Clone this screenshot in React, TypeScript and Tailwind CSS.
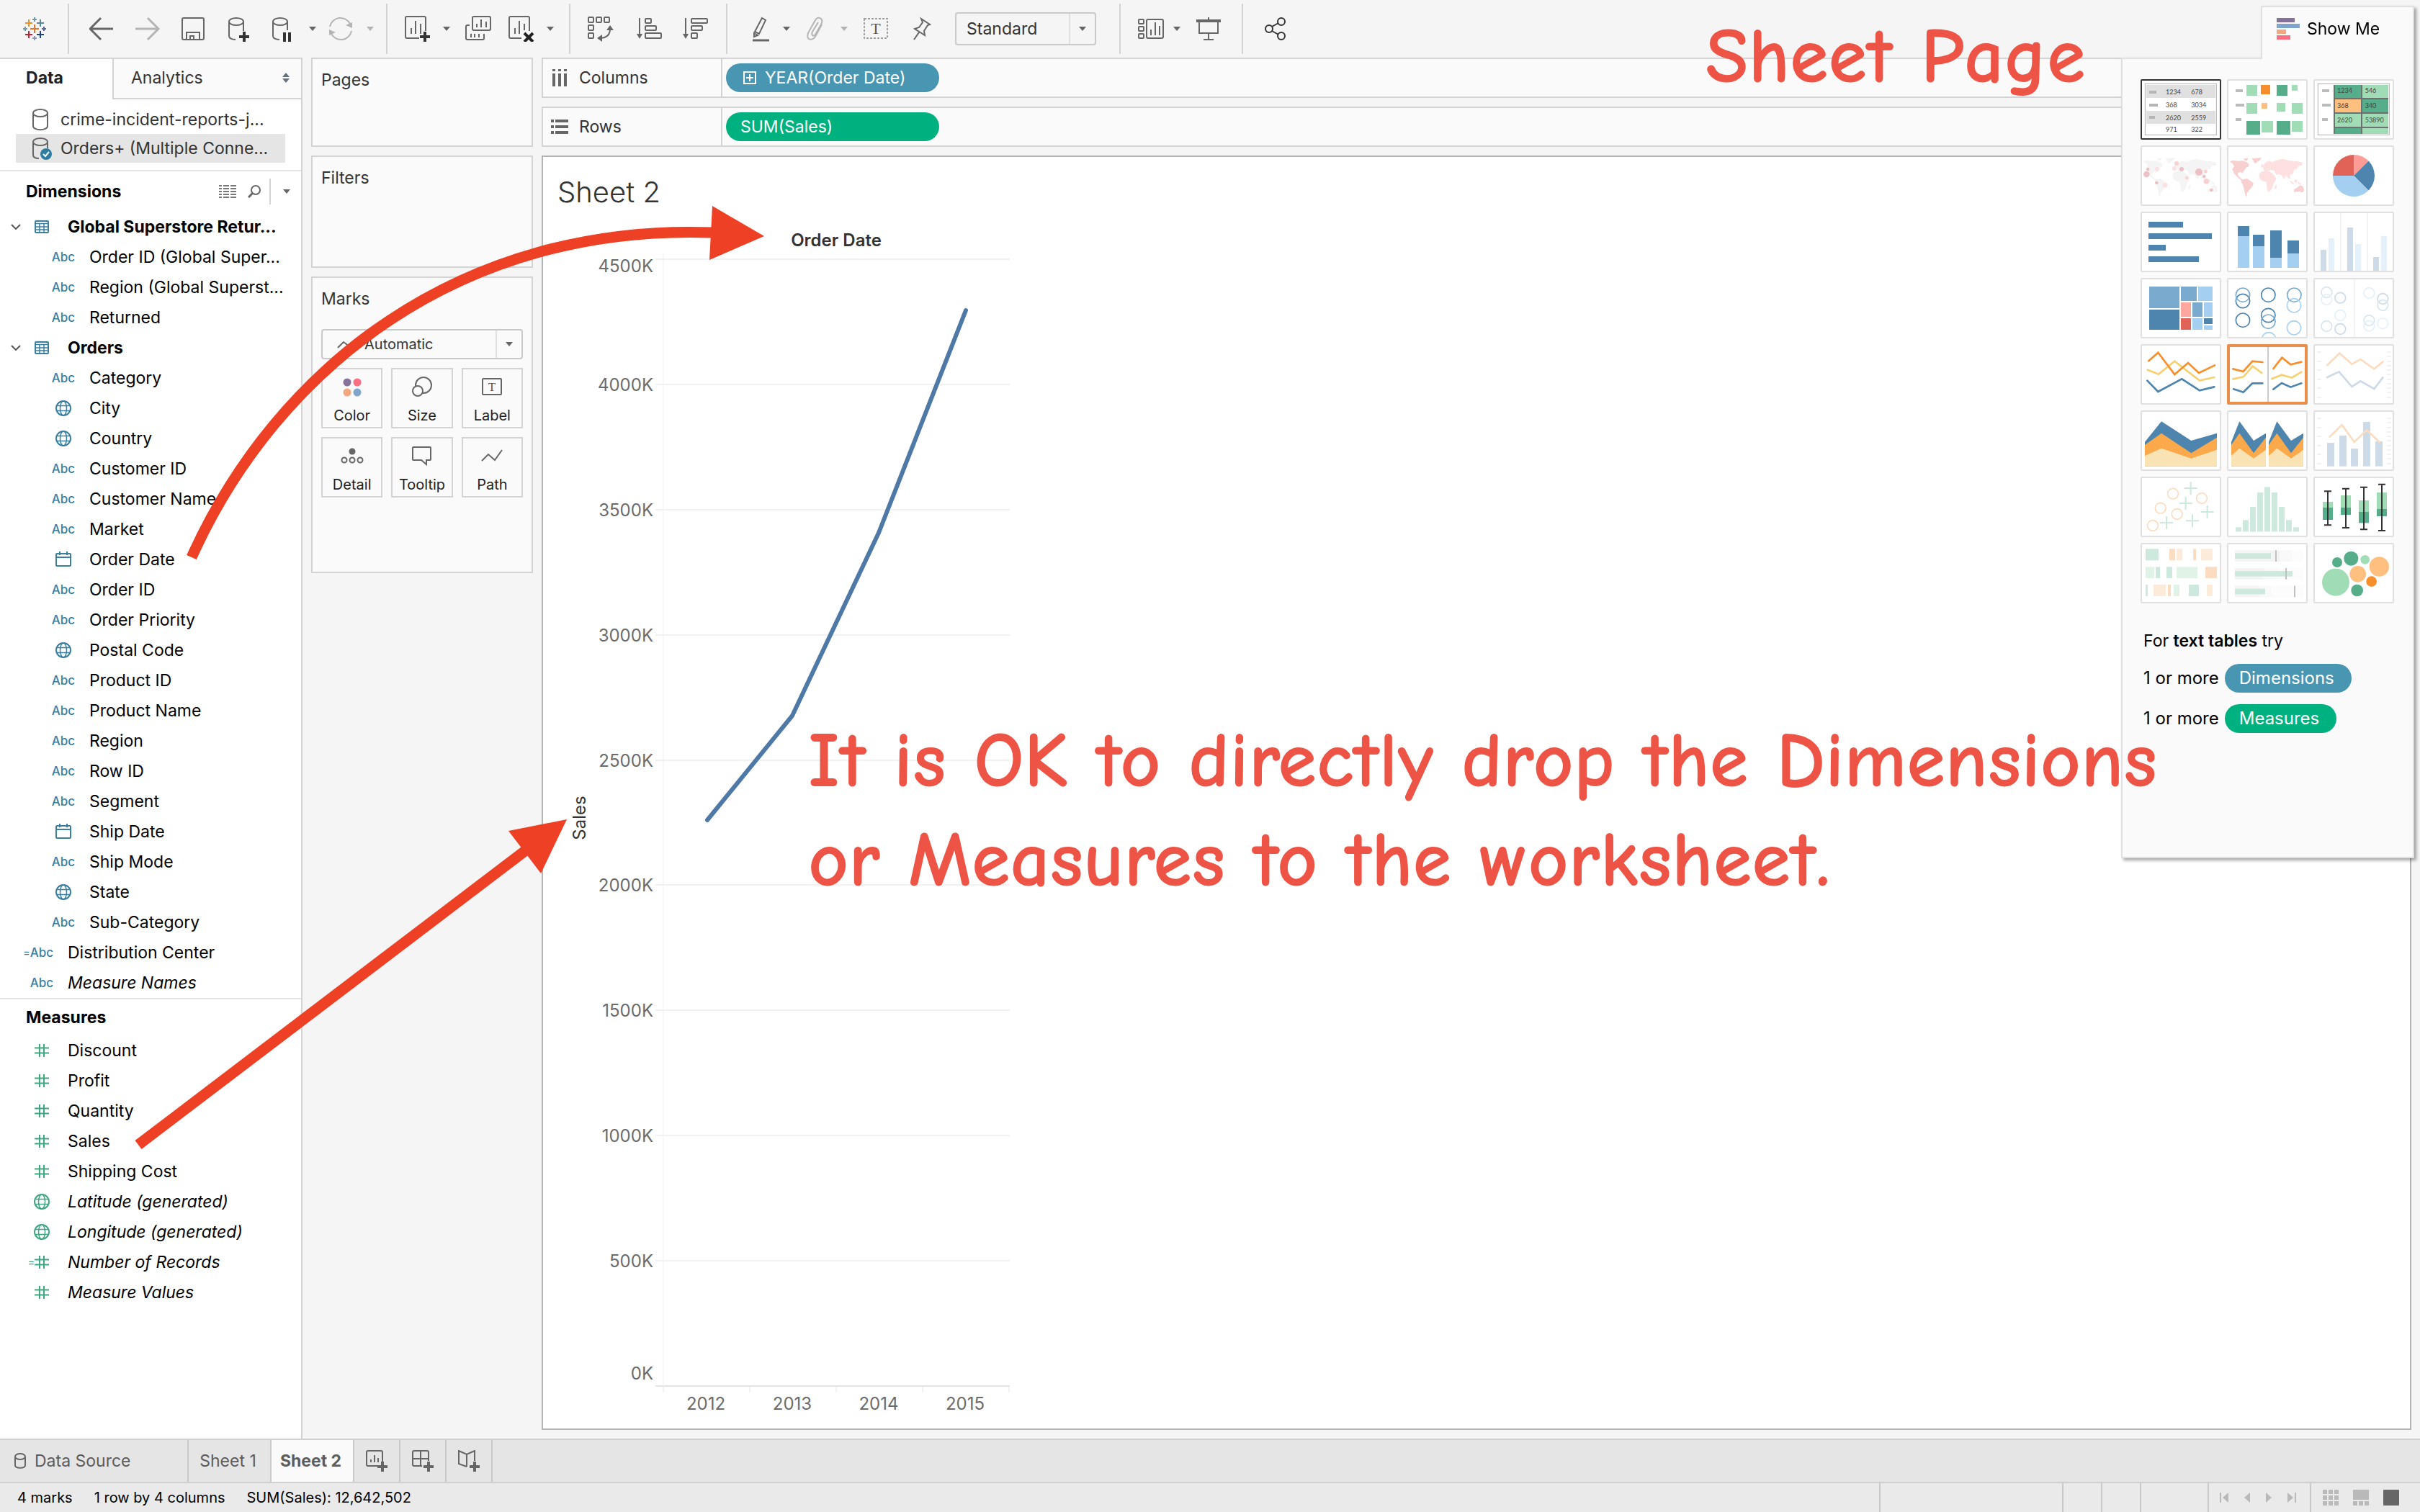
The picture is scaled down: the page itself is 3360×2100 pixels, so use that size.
import React from "react";

const BLUE = "#4e85af";
const MID = "#7aaace";
const SKY = "#a5cff0";
const GREEN = "#55ad89";
const MINT = "#a0ddb6";
const ORANGE = "#f68f2b";
const PEACH = "#ffbf7f";

/* ---------- toolbar icons, all on a 36 x 36 box ---------- */

function Icon({ children, color = "#666666" }: { children: React.ReactNode; color?: string }) {
  return (
    <svg viewBox="0 0 36 36" className="size-9" fill="none" stroke={color} strokeWidth="2" aria-hidden="true">
      {children}
    </svg>
  );
}

function plus(x: number, y: number, r: number) {
  return `M${x - r} ${y}h${2 * r}M${x} ${y - r}v${2 * r}`;
}

function Logo() {
  return (
    <Icon>
      <path d={plus(18, 18, 6)} stroke="#eb762b" />
      <path d={plus(10, 10, 5)} stroke="#eb912b" />
      <path d={plus(26, 10, 5)} stroke="#59879b" />
      <path d={plus(10, 26, 5)} stroke="#c72035" />
      <path d={plus(26, 26, 5)} stroke="#1f447e" />
      <path d={plus(18, 5, 3)} stroke="#7199a6" />
      <path d={plus(5, 18, 3)} stroke="#7199a6" />
      <path d={plus(31, 18, 3)} stroke="#5b6591" />
      <path d={plus(18, 31, 3)} stroke="#8f95b8" />
    </Icon>
  );
}

const BackIcon = () => (
  <Icon>
    <path d="M33 18H1M16 3 1 18l15 15" strokeWidth="3" />
  </Icon>
);
const ForwardIcon = () => (
  <Icon color="#b4b4b4">
    <path d="M0 18h32M17 3l15 15-15 15" strokeWidth="3" />
  </Icon>
);
const SaveIcon = () => (
  <Icon>
    <rect x="1" y="3" width="30" height="30" rx="2" />
    <path d="M7 33V23h18v10M12 33v-5h5v5" />
  </Icon>
);
const DataPlusIcon = () => (
  <Icon>
    <ellipse cx="12" cy="8" rx="10" ry="5" />
    <path d="M2 8v20c0 3 4 5 9 5M22 8v13" />
    <path d="M16 29h14M23 22v14" stroke="#333" strokeWidth="4" />
  </Icon>
);
const DataPauseIcon = () => (
  <Icon>
    <ellipse cx="13" cy="8" rx="10" ry="5" />
    <path d="M3 8v20c0 3 4 5 9 5M23 8v12" />
    <path d="M19 23v13M26 23v13" stroke="#333" strokeWidth="4" />
  </Icon>
);
const RefreshIcon = () => (
  <Icon color="#b4b4b4">
    <path d="M2 15A15 15 0 0 1 30 11M32 21A15 15 0 0 1 4 25" />
    <path d="M24 13l9-4v8zM10 23l-9 4v-8z" fill="#b4b4b4" stroke="none" />
  </Icon>
);
const NewSheetIcon = () => (
  <Icon>
    <path d="M20 31H3a2 2 0 0 1-2-2V3a2 2 0 0 1 2-2h24a2 2 0 0 1 2 2v18" />
    <path d="M9 25v-8M15 25V7M22 25V11" />
    <path d="M21 29h14M28 22v14" stroke="#333" strokeWidth="4" />
  </Icon>
);
const DuplicateIcon = () => (
  <Icon>
    <rect x="10" y="1" width="25" height="19" rx="2" />
    <path d="M16 16v-5M22 16V5M29 16V8M6 13H3a2 2 0 0 0-2 2v16a2 2 0 0 0 2 2h21a2 2 0 0 0 2-2v-6M8 30v-5M13 30v-5M19 30v-5" />
  </Icon>
);
const ClearIcon = () => (
  <Icon>
    <path d="M18 31H3a2 2 0 0 1-2-2V3a2 2 0 0 1 2-2h24a2 2 0 0 1 2 2v18" />
    <path d="M9 25v-8M15 25V7M22 20V11" />
    <path d="M22 24l12 12M34 24 22 36" stroke="#222" strokeWidth="4" />
  </Icon>
);
const SwapIcon = () => (
  <Icon>
    <rect x="1" y="2" width="7" height="7" rx="1" />
    <rect x="12" y="2" width="7" height="7" rx="1" />
    <rect x="23" y="2" width="7" height="7" rx="1" />
    <rect x="1" y="13" width="7" height="7" rx="1" />
    <rect x="1" y="24" width="7" height="7" rx="1" />
    <path d="M31 18c0 8-5 13-15 13" />
    <path d="M31 13l5 7H26zM13 31l7-5v10z" fill="#666" stroke="none" />
  </Icon>
);
const SortAscIcon = () => (
  <Icon>
    <path d="M4 3v26" />
    <path d="M4 32 0 25h8z" fill="#666" stroke="none" />
    <rect x="12" y="4" width="8" height="6" rx="1" />
    <rect x="12" y="14" width="15" height="6" rx="1" />
    <rect x="12" y="24" width="22" height="7" rx="1" />
  </Icon>
);
const SortDescIcon = () => (
  <Icon>
    <path d="M4 3v26" />
    <path d="M4 32 0 25h8z" fill="#666" stroke="none" />
    <rect x="12" y="4" width="22" height="6" rx="1" />
    <rect x="12" y="14" width="15" height="6" rx="1" />
    <rect x="12" y="24" width="8" height="7" rx="1" />
  </Icon>
);
const HighlightIcon = () => (
  <Icon>
    <path d="M20 3l5 3-9 19-6-3zM9 24l5 3-5 2z" />
    <path d="M7 34h23" strokeWidth="3" />
  </Icon>
);
const ClipIcon = () => (
  <Icon color="#b4b4b4">
    <path d="M27 12 19 27c-2 5-7 7-10 5s-2-6 0-10L18 6c2-4 6-4 8-2s2 4 0 8l-8 14c-1 2-3 2-4 1s-1-3 0-5l8-13" />
  </Icon>
);
const TextIcon = () => (
  <Icon>
    <rect x="2" y="4" width="32" height="27" stroke="#a0a0a0" strokeDasharray="3 2" />
    <text x="18" y="25" textAnchor="middle" fontFamily="Liberation Serif, serif" fontSize="22" fill="#555" stroke="none">
      T
    </text>
  </Icon>
);
const PinIcon = () => (
  <Icon>
    <path d="M17 4l12 8-3 1-5 8 1 6-14-9 6-2 5-7zM14 23 7 33" />
  </Icon>
);
const CardsIcon = () => (
  <Icon>
    <rect x="1" y="5" width="7" height="6" rx="1" />
    <rect x="1" y="15" width="7" height="6" rx="1" />
    <rect x="1" y="25" width="7" height="6" rx="1" />
    <rect x="12" y="5" width="23" height="26" rx="2" />
    <path d="M18 27v-8M24 27V9M30 27V14" />
  </Icon>
);
const PresentIcon = () => (
  <Icon>
    <path d="M1 7h34" strokeWidth="4" />
    <path d="M5 8v16h26V8M18 2v4M18 24v9M11 33h14" />
  </Icon>
);
const ShareIcon = () => (
  <Icon color="#333333">
    <circle cx="8" cy="18" r="5" />
    <circle cx="25" cy="8" r="5" />
    <circle cx="25" cy="28" r="5" />
    <path d="M12 15l9-5M12 21l9 5" />
  </Icon>
);

function Tool({ label, className, children }: { label: string; className?: string; children: React.ReactNode }) {
  return (
    <button type="button" aria-label={label} className={"shrink-0 " + (className ?? "")}>
      {children}
    </button>
  );
}

function Caret({ className = "", fill = "#666666" }: { className?: string; fill?: string }) {
  return (
    <svg viewBox="0 0 12 8" className={"h-2 w-3 shrink-0 " + className} aria-hidden="true">
      <path d="M1 1h10L6 7z" fill={fill} />
    </svg>
  );
}

const Rule = ({ className }: { className: string }) => <div className={"h-[70px] w-0.5 shrink-0 bg-[#d3d3d3] " + className} />;

function Toolbar() {
  return (
    <header className="flex h-20 items-center pl-[30px]">
      <Tool label="Start page"><Logo /></Tool>
      <Rule className="ml-7" />
      <Tool label="Undo" className="ml-7"><BackIcon /></Tool>
      <Tool label="Redo" className="ml-7"><ForwardIcon /></Tool>
      <Tool label="Save" className="ml-7"><SaveIcon /></Tool>
      <Tool label="New data source" className="ml-7"><DataPlusIcon /></Tool>
      <Tool label="Pause updates" className="ml-6"><DataPauseIcon /></Tool>
      <Caret className="ml-4" />
      <Tool label="Refresh" className="ml-4"><RefreshIcon /></Tool>
      <Caret className="ml-4" fill="#b4b4b4" />
      <Rule className="ml-4" />
      <Tool label="New worksheet" className="ml-6"><NewSheetIcon /></Tool>
      <Caret className="ml-4" />
      <Tool label="Duplicate" className="ml-5"><DuplicateIcon /></Tool>
      <Tool label="Clear sheet" className="ml-6"><ClearIcon /></Tool>
      <Caret className="ml-4" />
      <Rule className="ml-5" />
      <Tool label="Swap rows and columns" className="ml-6"><SwapIcon /></Tool>
      <Tool label="Sort ascending" className="ml-8"><SortAscIcon /></Tool>
      <Tool label="Sort descending" className="ml-7"><SortDescIcon /></Tool>
      <Rule className="ml-6" />
      <Tool label="Highlight" className="ml-7"><HighlightIcon /></Tool>
      <Caret className="ml-3" />
      <Tool label="Group members" className="ml-4"><ClipIcon /></Tool>
      <Caret className="ml-4" fill="#b4b4b4" />
      <Tool label="Show mark labels" className="ml-5"><TextIcon /></Tool>
      <Tool label="Fix axes" className="ml-7"><PinIcon /></Tool>
      <div className="ml-7 flex h-[46px] w-[196px] items-center rounded-sm border-2 border-[#c9c9c9]">
        <select aria-label="Fit" className="h-full min-w-0 flex-1 appearance-none pl-3.5 text-[23px] text-[#333]">
          <option>Standard</option>
        </select>
        <div className="flex h-full w-9 items-center justify-center border-l-2 border-[#e0e0e0]">
          <Caret />
        </div>
      </div>
      <Rule className="ml-8" />
      <Tool label="Show or hide cards" className="ml-6"><CardsIcon /></Tool>
      <Caret className="ml-3" />
      <Tool label="Presentation mode" className="ml-5"><PresentIcon /></Tool>
      <Rule className="ml-7" />
      <Tool label="Share" className="ml-7"><ShareIcon /></Tool>
    </header>
  );
}

/* ---------- data pane ---------- */

type Kind = "abc" | "geo" | "date" | "num" | "table";
type Field = { name: string; kind: Kind; calc?: boolean; italic?: boolean; level?: 1 | 2 };

const dimensions: Field[] = [
  { name: "Global Superstore Retur...", kind: "table" },
  { name: "Order ID (Global Super...", kind: "abc", level: 2 },
  { name: "Region (Global Superst...", kind: "abc", level: 2 },
  { name: "Returned", kind: "abc", level: 2 },
  { name: "Orders", kind: "table" },
  { name: "Category", kind: "abc", level: 2 },
  { name: "City", kind: "geo", level: 2 },
  { name: "Country", kind: "geo", level: 2 },
  { name: "Customer ID", kind: "abc", level: 2 },
  { name: "Customer Name", kind: "abc", level: 2 },
  { name: "Market", kind: "abc", level: 2 },
  { name: "Order Date", kind: "date", level: 2 },
  { name: "Order ID", kind: "abc", level: 2 },
  { name: "Order Priority", kind: "abc", level: 2 },
  { name: "Postal Code", kind: "geo", level: 2 },
  { name: "Product ID", kind: "abc", level: 2 },
  { name: "Product Name", kind: "abc", level: 2 },
  { name: "Region", kind: "abc", level: 2 },
  { name: "Row ID", kind: "abc", level: 2 },
  { name: "Segment", kind: "abc", level: 2 },
  { name: "Ship Date", kind: "date", level: 2 },
  { name: "Ship Mode", kind: "abc", level: 2 },
  { name: "State", kind: "geo", level: 2 },
  { name: "Sub-Category", kind: "abc", level: 2 },
  { name: "Distribution Center", kind: "abc", calc: true },
  { name: "Measure Names", kind: "abc", italic: true },
];

const measures: Field[] = [
  { name: "Discount", kind: "num" },
  { name: "Profit", kind: "num" },
  { name: "Quantity", kind: "num" },
  { name: "Sales", kind: "num" },
  { name: "Shipping Cost", kind: "num" },
  { name: "Latitude (generated)", kind: "geo", italic: true },
  { name: "Longitude (generated)", kind: "geo", italic: true },
  { name: "Number of Records", kind: "num", calc: true, italic: true },
  { name: "Measure Values", kind: "num", italic: true },
];

function FieldIcon({ kind }: { kind: Kind }) {
  if (kind === "abc") return <span className="text-[17px] leading-none font-medium">Abc</span>;
  if (kind === "geo")
    return (
      <svg viewBox="0 0 22 22" className="size-[22px]" fill="none" stroke="currentColor" strokeWidth="2">
        <circle cx="11" cy="11" r="10" />
        <ellipse cx="11" cy="11" rx="4.5" ry="10" strokeWidth="1.5" />
        <path d="M2 7.5h18M2 14.5h18" strokeWidth="1.5" />
      </svg>
    );
  if (kind === "date")
    return (
      <svg viewBox="0 0 22 22" className="size-[22px]" fill="none" stroke="currentColor" strokeWidth="2">
        <rect x="1" y="3" width="20" height="17" rx="1" />
        <path d="M1 8h20M6 0v5M16 0v5" />
      </svg>
    );
  if (kind === "table")
    return (
      <svg viewBox="0 0 20 18" className="h-[18px] w-5" fill="none" stroke="currentColor" strokeWidth="1.5">
        <rect x="1" y="1" width="18" height="16" rx="1" strokeWidth="2" />
        <path d="M1 4.5h18M1 9h18M1 13h18M7 4.5V17M13 4.5V17" />
      </svg>
    );
  return (
    <svg viewBox="0 0 20 20" className="size-5" fill="none" stroke="currentColor" strokeWidth="2">
      <path d="M0 6.5h20M0 13.5h20M7 1v18M13 1v18" />
    </svg>
  );
}

function FieldRow({ field }: { field: Field }) {
  const { name, kind, calc, italic, level } = field;
  const isTable = kind === "table";
  return (
    <li className={"flex h-[42px] items-center " + (level === 2 ? "pl-[66px]" : "")}>
      {level !== 2 && (
        <span className="flex w-9 justify-center pl-2">
          {isTable && (
            <svg viewBox="0 0 14 8" className="h-2 w-3.5" fill="none" stroke="#555" strokeWidth="2">
              <path d="M1 1l6 6 6-6" />
            </svg>
          )}
        </span>
      )}
      <span className={"flex w-11 items-center " + (calc ? (kind === "abc" ? "justify-end pr-1.5" : "justify-end pr-3") : "justify-center")}>
        {calc && <span className="text-sm leading-none font-medium">=</span>}
        <FieldIcon kind={kind} />
      </span>
      <span className={"ml-3.5 whitespace-nowrap text-black " + (isTable ? "font-bold " : "") + (italic ? "italic" : "")}>{name}</span>
    </li>
  );
}

function Cylinder({ checked }: { checked?: boolean }) {
  return (
    <svg viewBox="0 0 28 32" className="h-8 w-7 shrink-0" fill="none" stroke="#666" strokeWidth="2">
      <ellipse cx="12" cy="7" rx="10" ry="5" />
      {checked ? <path d="M2 7v18c0 3 3 5 8 5M22 7v9" /> : <path d="M2 7v18c0 7 20 7 20 0V7" />}
      {checked && (
        <>
          <circle cx="20" cy="24" r="8" fill="#2f7d9e" stroke="none" />
          <path d="M16 24l3 3 5-6" stroke="#fff" />
        </>
      )}
    </svg>
  );
}

function DataPane() {
  return (
    <aside className="flex w-[420px] shrink-0 flex-col border-t-2 border-r-2 border-[#d3d3d3] bg-white">
      <div className="flex h-14" role="tablist">
        <button type="button" role="tab" aria-selected="true" className="w-[156px] pr-8 pb-1 font-bold text-[#222]">
          Data
        </button>
        <button
          type="button"
          role="tab"
          aria-selected="false"
          className="flex flex-1 items-center justify-between border-b-2 border-l-2 border-[#d3d3d3] bg-[#fafafa] pr-4 pb-0.5 pl-6 text-[#333]"
        >
          Analytics
          <svg viewBox="0 0 10 14" className="h-3.5 w-2.5">
            <path d="M5 0l5 6H0zM5 14l5-6H0z" fill="#667180" />
          </svg>
        </button>
      </div>
      <ul className="border-b-2 border-[#e3e3e3] px-[22px] pt-2 pb-2.5 text-[#333]">
        <li className="flex h-10 items-center gap-3 pl-[22px]">
          <Cylinder />
          <span className="whitespace-nowrap">crime-incident-reports-j...</span>
        </li>
        <li className="flex h-10 items-center gap-3 bg-[#e5e5e5] pl-[22px]">
          <Cylinder checked />
          <span className="whitespace-nowrap">Orders+ (Multiple Conne...</span>
        </li>
      </ul>
      <div className="flex h-14 items-center pr-3.5 pl-9">
        <h2 className="flex-1 font-bold text-black">Dimensions</h2>
        <button type="button" aria-label="View data">
          <svg viewBox="0 0 24 18" className="h-[18px] w-6" stroke="#777" strokeWidth="2">
            <path d="M0 1h4M6 1h8M16 1h8M0 5h4M6 5h8M16 5h8M0 9h4M6 9h8M16 9h8M0 13h4M6 13h8M16 13h8M0 17h4M6 17h8M16 17h8" />
          </svg>
        </button>
        <button type="button" aria-label="Find field" className="ml-4">
          <svg viewBox="0 0 18 18" className="size-[18px]" fill="none" stroke="#666" strokeWidth="2">
            <circle cx="11" cy="7" r="6" />
            <path d="M7 11l-6 6" strokeWidth="3" />
          </svg>
        </button>
        <div className="ml-3 h-9 w-0.5 bg-[#d3d3d3]" />
        <Caret className="ml-4" />
      </div>
      <ul className="border-b-2 border-[#e3e3e3] text-[#3a7f9f]">
        {dimensions.map((f) => (
          <FieldRow key={f.name} field={f} />
        ))}
      </ul>
      <h2 className="flex h-[50px] items-center pl-9 font-bold text-black">Measures</h2>
      <ul className="text-[#3fa77f]">
        {measures.map((f) => (
          <FieldRow key={f.name} field={f} />
        ))}
      </ul>
    </aside>
  );
}

/* ---------- cards ---------- */

function MarkButton({ label, children }: { label: string; children: React.ReactNode }) {
  return (
    <button type="button" className="flex h-[84px] flex-col items-center justify-between border-2 border-[#d3d3d3] pt-2.5 pb-1 text-xl text-[#222]">
      <svg viewBox="0 0 32 28" className="h-7 w-8" fill="none" stroke="#666" strokeWidth="2">
        {children}
      </svg>
      <span className="leading-6">{label}</span>
    </button>
  );
}

function Cards() {
  return (
    <div className="flex w-[308px] shrink-0 flex-col gap-3 text-[#333]">
      <section className="h-[124px] border-2 border-[#d3d3d3] bg-[#fafafa] px-3 pt-3">
        <h2>Pages</h2>
      </section>
      <section className="h-[156px] border-2 border-[#d3d3d3] bg-[#fafafa] px-3 pt-3">
        <h2>Filters</h2>
      </section>
      <section className="h-[412px] border-2 border-[#d3d3d3] bg-[#fafafa] px-3 pt-3">
        <h2>Marks</h2>
        <div className="mt-6 flex h-[42px] items-center rounded-sm border-2 border-[#c9c9c9] pl-5">
          <svg viewBox="0 0 28 16" className="h-4 w-7 shrink-0" fill="none" stroke="#666" strokeWidth="2">
            <path d="M1 13l8-8 9 7 9-10" />
          </svg>
          <select aria-label="Mark type" className="h-full min-w-0 flex-1 appearance-none pl-2.5 text-xl">
            <option>Automatic</option>
          </select>
          <div className="flex h-full w-9 items-center justify-center border-l-2 border-[#e0e0e0]">
            <Caret />
          </div>
        </div>
        <div className="mt-3 grid grid-cols-3 gap-3">
          <MarkButton label="Color">
            <g stroke="none">
              <circle cx="9" cy="8" r="5.5" fill="#86719a" />
              <circle cx="23" cy="8" r="5.5" fill="#fa6f81" />
              <circle cx="9" cy="22" r="5.5" fill="#f3a77d" />
              <circle cx="23" cy="22" r="5.5" fill="#80a4cb" />
            </g>
          </MarkButton>
          <MarkButton label="Size">
            <circle cx="18" cy="12" r="11" />
            <circle cx="10" cy="20" r="7" fill="#fafafa" />
          </MarkButton>
          <MarkButton label="Label">
            <rect x="3" y="3" width="26" height="22" rx="1" />
            <text x="16" y="20" textAnchor="middle" fontFamily="Liberation Serif, serif" fontSize="17" fill="#555" stroke="none">
              T
            </text>
          </MarkButton>
          <MarkButton label="Detail">
            <circle cx="16" cy="8" r="4.5" fill="#666" stroke="none" />
            <circle cx="5" cy="20" r="3.5" />
            <circle cx="16" cy="20" r="3.5" />
            <circle cx="27" cy="20" r="3.5" />
          </MarkButton>
          <MarkButton label="Tooltip">
            <path d="M4 2h23a1 1 0 0 1 1 1v16a1 1 0 0 1-1 1h-5v6l-7-6H4a1 1 0 0 1-1-1V3a1 1 0 0 1 1-1z" />
          </MarkButton>
          <MarkButton label="Path">
            <path d="M2 21l9-9 9 8L30 6" />
          </MarkButton>
        </div>
      </section>
    </div>
  );
}

/* ---------- worksheet ---------- */

function Shelves() {
  return (
    <>
      <section className="flex h-14 items-center border-2 border-r-0 border-[#d3d3d3] bg-[#fafafa]">
        <h2 className="flex h-full w-[249px] items-center border-r-2 border-[#d3d3d3] pl-2.5 text-[#333]">
          <svg viewBox="0 0 26 24" className="h-6 w-[26px]" stroke="#666" strokeWidth="4">
            <path d="M5 0v3M13 0v3M21 0v3M5 6v18M13 6v18M21 6v18" />
          </svg>
          <span className="ml-3.5">Columns</span>
        </h2>
        <button type="button" className="ml-[5px] flex h-10 w-[296px] items-center rounded-full bg-[#4996b2] pl-6 text-white">
          <svg viewBox="0 0 18 18" className="size-[18px]" fill="none" stroke="#fff" strokeWidth="2">
            <path d="M1 1h16v16H1zM4 9h10M9 4v10" />
          </svg>
          <span className="ml-3">YEAR(Order Date)</span>
        </button>
      </section>
      <section className="flex h-14 items-center border-2 border-r-0 border-[#d3d3d3] bg-[#fafafa]">
        <h2 className="flex h-full w-[249px] items-center border-r-2 border-[#d3d3d3] pl-2.5 text-[#333]">
          <svg viewBox="0 0 26 24" className="h-6 w-[26px]" stroke="#666" strokeWidth="4">
            <path d="M1 4h4M7 4h18M1 12h4M7 12h18M1 20h4M7 20h18" />
          </svg>
          <span className="ml-3.5">Rows</span>
        </h2>
        <button type="button" className="ml-[5px] flex h-10 w-[296px] items-center rounded-full bg-[#00b180] pl-5 text-white">
          SUM(Sales)
        </button>
      </section>
    </>
  );
}

const ticks = [4500, 4000, 3500, 3000, 2500, 2000, 1500, 1000, 500, 0];
const yOf = (v: number) => Math.round(52 + ((4500 - v) * 1565) / 4500);
const labelY = (v: number) => yOf(v) + (v === 4500 ? 9 : v === 0 ? -18 : 0);

function Chart() {
  return (
    <svg viewBox="0 0 660 1670" className="h-[1670px] w-[660px]" role="img" aria-label="Sales by year of Order Date" fontSize="24">
      <text x="407" y="34" textAnchor="middle" fontWeight="600" fill="#333">
        Order Date
      </text>
      <text transform="translate(59 828) rotate(-90)" textAnchor="middle" fill="#333">
        Sales
      </text>
      {ticks.map((v) => (
        <g key={v}>
          <path d={`M156 ${yOf(v)}H648`} stroke={v ? "#f1f1f1" : "#e4e4e4"} strokeWidth="2" />
          <text x="153" y={labelY(v) + 9} textAnchor="end" fill="#6b6b6b">
            {v}K
          </text>
        </g>
      ))}
      <path d="M167 44V1617" stroke="#f1f1f1" />
      <path d="M167 1617v9M287 1617v9M407 1617v9M527 1617v9M647 1617v9" stroke="#e4e4e4" />
      {[2012, 2013, 2014, 2015].map((y, i) => (
        <text key={y} x={226 + i * 120} y="1650" textAnchor="middle" fill="#6b6b6b">
          {y}
        </text>
      ))}
      <path d="M228 831 346 686 466 432 587 123" fill="none" stroke="#4e79a7" strokeWidth="6" strokeLinecap="round" strokeLinejoin="round" />
    </svg>
  );
}

/* ---------- Show Me thumbnails, on a 336 x 252 box ---------- */

type Box = [number, number, number, number, string];
type Dot = [number, number, number, string];

const Boxes = ({ items }: { items: Box[] }) => (
  <>
    {items.map(([x, y, w, h, c], i) => (
      <rect key={i} x={x} y={y} width={w} height={h} fill={c} />
    ))}
  </>
);
const Dots = ({ items }: { items: Dot[] }) => (
  <>
    {items.map(([x, y, r, c], i) => (
      <circle key={i} cx={x} cy={y} r={r} fill={c} />
    ))}
  </>
);
const Rings = ({ items }: { items: Dot[] }) => (
  <>
    {items.map(([x, y, r, c], i) => (
      <circle key={i} cx={x} cy={y} r={r} fill="none" stroke={c} strokeWidth="5" />
    ))}
  </>
);
const Line = ({ d, c }: { d: string; c: string }) => (
  <polyline points={d} fill="none" stroke={c} strokeWidth="8" strokeLinecap="round" />
);
const Numbers = ({ items }: { items: [number, number, string][] }) => (
  <g fontFamily="Lato, sans-serif" fontSize="27" fill="#444">
    {items.map(([x, y, t]) => (
      <text key={t} x={x} y={y}>
        {t}
      </text>
    ))}
  </g>
);

const dashes: Box[] = [
  [36, 42, 30, 12, "#bbbbbb"],
  [36, 102, 36, 12, "#bbbbbb"],
  [36, 162, 24, 12, "#bbbbbb"],
];

const americas =
  "M12 68 24 62 44 65 66 64 82 70 92 78 90 88 80 92 72 104 64 116 58 110 46 114 46 124 56 136 64 142 84 138 98 148 111 158 106 170 98 180 88 192 82 202 84 213 76 208 72 186 68 168 60 154 60 146 44 132 30 118 22 98 30 88 24 76ZM68 56 88 52 84 64 74 62ZM104 54 144 51 136 62 116 76 110 64Z";
const eurasia =
  "M152 98 150 84 162 70 176 64 188 70 204 62 232 56 262 64 292 66 316 72 312 84 300 84 290 98 280 100 276 116 262 124 264 140 254 136 246 124 238 142 230 128 220 120 204 122 196 104 182 102 170 106 156 108ZM142 80l8-2 0 12-8 2ZM140 110 170 106 190 116 206 138 194 160 188 178 176 194 168 188 164 152 146 148 134 134 134 120ZM200 168l8-6-2 18-8 4ZM264 146l16 14-4 4-14-14ZM284 140l10 6-6 12-8-8ZM296 152l16 8-4 4-14-6Z";
const australia = "M278 184 292 176 304 166 316 170 322 186 314 196 304 192 280 194Z";

const axisTicks = (
  <path
    d="M15 33h18M15 72h18M15 108h18M15 147h18M15 183h18M15 222h18M306 33h18M306 51h18M306 72h18M306 90h18M306 108h18M306 126h18M306 147h18M306 165h18M306 183h18M306 201h18M306 222h18"
    stroke="#f2f2f2"
    strokeWidth="6"
  />
);

function areas(xs: number[]) {
  const [a, b, c, d] = xs;
  return (
    <>
      <path d={`M${a} 131 ${b} 46 ${c} 126 ${d} 95V233H${a}Z`} fill={BLUE} />
      <path d={`M${a} 144 ${b} 95 ${c} 178 ${d} 113V233H${a}Z`} fill="#fba94a" />
      <path d={`M${a} 189 ${b} 158 ${c} 200 ${d} 164V233H${a}Z`} fill="#f9e2b3" />
    </>
  );
}

const stacked = (x: number, top: number, split: number): Box[] => [
  [x, top, 48, split - top, BLUE],
  [x, split, 48, 234 - split, SKY],
];

const whisker = (x: number, lo: number, a: number, b: number, c: number, hi: number) => (
  <g key={x}>
    <rect x={x - 21} y={a} width="42" height={b - a} fill={MINT} />
    <rect x={x - 21} y={b} width="42" height={c - b} fill={GREEN} />
    <path d={`M${x} ${lo}V${hi}M${x - 15} ${lo}h30M${x - 15} ${hi}h30`} stroke="#333" strokeWidth="6" />
  </g>
);

const thumbs: { name: string; art: React.ReactNode }[] = [
  {
    name: "Text table",
    art: (
      <>
        <rect x="19" y="19" width="297" height="213" fill="none" stroke="#b0b0b0" strokeWidth="3" />
        <Boxes items={[[24, 24, 288, 54, "#e0e0e0"], [24, 132, 288, 54, "#e0e0e0"], [36, 48, 30, 12, "#b5b5b5"], [36, 102, 36, 12, "#b5b5b5"], [36, 153, 24, 12, "#b5b5b5"]]} />
        <Numbers items={[[105, 62, "1234"], [211, 62, "678"], [105, 116, "368"], [211, 116, "3034"], [105, 170, "2620"], [211, 170, "2559"], [105, 218, "971"], [211, 218, "322"]]} />
      </>
    ),
  },
  {
    name: "Heat map",
    art: (
      <Boxes
        items={[
          ...dashes,
          [81, 24, 45, 45, MINT], [141, 24, 39, 39, ORANGE], [207, 24, 45, 45, GREEN], [270, 24, 24, 24, MINT],
          [81, 99, 45, 45, MINT], [144, 99, 24, 24, PEACH], [207, 99, 36, 36, MINT], [270, 99, 45, 45, MINT],
          [81, 174, 57, 57, GREEN], [144, 174, 48, 48, MINT], [207, 174, 57, 57, GREEN], [270, 174, 45, 45, MINT],
        ]}
      />
    ),
  },
  {
    name: "Highlight table",
    art: (
      <>
        <rect x="19" y="19" width="297" height="213" fill="none" stroke="#b0b0b0" strokeWidth="3" />
        <Boxes
          items={[
            ...dashes,
            [84, 24, 228, 204, "#707070"],
            [90, 24, 108, 54, GREEN], [204, 24, 108, 54, MINT],
            [90, 84, 108, 54, PEACH], [204, 84, 108, 54, GREEN],
            [90, 144, 108, 54, MINT], [204, 144, 108, 54, MINT],
            [90, 204, 108, 24, GREEN], [204, 204, 108, 24, MINT],
          ]}
        />
        <Numbers items={[[99, 57, "1234"], [215, 57, "546"], [99, 120, "368"], [215, 120, "340"], [99, 180, "2620"], [215, 180, "53890"]]} />
      </>
    ),
  },
  {
    name: "Symbol map",
    art: (
      <>
        <path d={americas + eurasia + australia} fill="#f4f4f4" />
        <Dots
          items={[
            [25, 120, 13, "#ecc0c5"], [31, 99, 7, "#ecc0c5"], [69, 99, 9, "#fde0e0"], [67, 156, 7, "#ecc0c5"], [102, 166, 10, "#fde0e0"],
            [150, 75, 9, "#f7d0cf"], [141, 96, 9, "#fde0e0"], [171, 99, 9, "#ecc0c5"], [193, 135, 7, "#f7d0cf"], [243, 111, 15, "#ecc0c5"],
            [271, 108, 7, "#f7d0cf"], [265, 129, 7, "#ecc0c5"], [274, 149, 11, "#f7d0cf"], [295, 186, 7, "#ecc0c5"],
          ]}
        />
      </>
    ),
  },
  {
    name: "Filled map",
    art: (
      <>
        <path d={americas + australia} fill="#f7d0cf" />
        <path d={eurasia} fill="#ffe0e0" />
      </>
    ),
  },
  {
    name: "Pie chart",
    art: (
      <>
        <path d="M168 126H81A87 87 0 0 1 168 39Z" fill="#e16357" />
        <path d="M168 126V39A87 87 0 0 1 229.5 64.5Z" fill="#ff9c96" />
        <path d="M168 126 229.5 64.5A87 87 0 0 1 229.5 187.5Z" fill={BLUE} />
        <path d="M168 126 229.5 187.5A87 87 0 0 1 81 126Z" fill={SKY} />
      </>
    ),
  },
  {
    name: "Horizontal bars",
    art: <Boxes items={[[33, 42, 144, 24, BLUE], [33, 90, 264, 24, BLUE], [33, 138, 72, 24, BLUE], [33, 186, 210, 24, BLUE]]} />,
  },
  {
    name: "Stacked bars",
    art: <Boxes items={[...stacked(45, 60, 102), ...stacked(108, 96, 144), ...stacked(180, 78, 192), ...stacked(252, 120, 174)]} />,
  },
  {
    name: "Side-by-side bars",
    art: (
      <Boxes
        items={[
          [111, 6, 6, 240, "#f3f3f3"], [222, 6, 6, 240, "#f3f3f3"],
          [30, 159, 24, 87, "#cddbe8"], [141, 66, 24, 180, "#cddbe8"], [249, 189, 24, 57, "#cddbe8"],
          [63, 111, 24, 135, "#e4f1fb"], [174, 135, 24, 111, "#e4f1fb"], [282, 102, 24, 144, "#e4f1fb"],
        ]}
      />
    ),
  },
  {
    name: "Treemap",
    art: (
      <Boxes
        items={[
          [36, 36, 126, 90, MID], [36, 132, 126, 84, BLUE], [168, 36, 66, 60, MID], [240, 36, 60, 60, SKY],
          [168, 102, 42, 60, "#ffa69e"], [216, 102, 42, 60, MID], [264, 102, 36, 60, SKY],
          [168, 168, 42, 48, "#e16357"], [216, 168, 42, 48, SKY], [264, 168, 36, 24, BLUE], [264, 198, 36, 18, SKY],
        ]}
      />
    ),
  },
  {
    name: "Circle views",
    art: (
      <Rings
        items={[
          [66, 96, 29, BLUE], [66, 71, 29, MID], [66, 176, 29, BLUE], [172, 71, 29, BLUE], [172, 156, 29, BLUE],
          [172, 182, 29, MID], [174, 256, 29, SKY], [280, 71, 29, MID], [279, 115, 29, SKY], [279, 208, 29, SKY],
        ]}
      />
    ),
  },
  {
    name: "Side-by-side circles",
    art: (
      <>
        <rect x="168" y="6" width="6" height="240" fill="#f3f3f3" />
        <Rings
          items={[
            [55, 60, 22, "#d9e6f1"], [55, 90, 22, "#e4f1fb"], [112, 83, 22, "#cddbe8"], [112, 156, 22, "#e4f1fb"],
            [55, 201, 22, "#d9e6f1"], [112, 213, 22, "#cddbe8"], [232, 63, 22, "#e4f1fb"], [289, 87, 22, "#cddbe8"],
            [289, 114, 22, "#d9e6f1"], [232, 177, 22, "#d9e6f1"], [232, 200, 22, "#e4f1fb"], [289, 190, 22, "#e4f1fb"],
          ]}
        />
      </>
    ),
  },
  {
    name: "Continuous lines",
    art: (
      <>
        <Line c="#f7d070" d="29,107 75,125 142,71 246,152 307,138" />
        <Line c={ORANGE} d="34,70 73,35 142,126 198,78 243,120 309,88" />
        <Line c={BLUE} d="28,152 73,198 172,145 246,193 307,178" />
      </>
    ),
  },
  {
    name: "Discrete lines",
    art: (
      <>
        <rect x="168" y="6" width="6" height="240" fill="#cccccc" />
        <Line c={ORANGE} d="25,103 68,114 106,71 148,75" />
        <Line c="#f7d070" d="25,145 68,136 107,92 145,120" />
        <Line c={BLUE} d="27,187 68,200 106,163 148,163" />
        <Line c={ORANGE} d="193,102 229,56 265,85 310,74" />
        <Line c="#f7d070" d="187,144 228,128 270,140 310,116" />
        <Line c={BLUE} d="193,188 228,162 265,179 310,163" />
      </>
    ),
  },
  {
    name: "Dual lines",
    art: (
      <>
        {axisTicks}
        <Line c="#fbdcc0" d="58,87 109,38 160,83 196,63 253,103 290,73" />
        <Line c="#cddbe8" d="57,138 107,115 160,177 196,154 253,186 289,139" />
      </>
    ),
  },
  { name: "Continuous area", art: areas([18, 87, 211, 318]) },
  {
    name: "Discrete area",
    art: (
      <>
        {areas([18, 52, 111, 162])}
        {areas([174, 208, 267, 318])}
      </>
    ),
  },
  {
    name: "Dual combination",
    art: (
      <>
        {axisTicks}
        <Boxes items={[[57, 135, 30, 98, "#cddbe8"], [108, 105, 30, 128, "#cddbe8"], [156, 159, 30, 74, "#cddbe8"], [207, 48, 30, 185, "#cddbe8"], [258, 129, 30, 104, "#cddbe8"]]} />
        <Line c="#fbdcc0" d="68,110 119,60 170,132 222,82 275,132" />
      </>
    ),
  },
  {
    name: "Scatter plot",
    art: (
      <>
        <Rings items={[[135, 71, 22, "#fbdcc0"], [83, 131, 22, "#fbdcc0"], [152, 156, 22, "#fbdcc0"], [255, 90, 22, "#fbdcc0"], [51, 204, 22, "#fbdcc0"]]} />
        <path d={plus(209, 48, 27) + plus(188, 111, 27) + plus(278, 147, 27) + plus(216, 184, 27) + plus(108, 192, 27)} stroke="#cde8dc" strokeWidth="6" />
      </>
    ),
  },
  {
    name: "Histogram",
    art: (
      <Boxes
        items={[211, 181, 126, 66, 43, 66, 126, 181, 211].map((y, i): Box => [36 + i * 30, y, 24, 229 - y, "#cde8dc"])}
      />
    ),
  },
  {
    name: "Box-and-whisker plot",
    art: (
      <>
        {whisker(60, 61, 105, 129, 180, 202)}
        {whisker(135, 50, 78, 129, 159, 213)}
        {whisker(210, 44, 99, 147, 193, 220)}
        {whisker(285, 32, 66, 135, 165, 225)}
      </>
    ),
  },
  {
    name: "Gantt view",
    art: (
      <Boxes
        items={[
          [21, 25, 54, 48, "#cde8dc"], [120, 25, 24, 48, "#fbdcc0"], [150, 25, 24, 48, "#fdebd9"], [219, 25, 12, 48, "#fbdcc0"], [252, 25, 48, 48, "#fdebd9"],
          [21, 100, 36, 47, "#e1f3e7"], [63, 100, 18, 47, "#cde8dc"], [108, 100, 24, 47, "#cde8dc"], [150, 100, 87, 47, "#e1f3e7"], [270, 100, 48, 47, "#fbdcc0"],
          [21, 174, 9, 48, "#cde8dc"], [54, 174, 51, 48, "#fdebd9"], [114, 174, 12, 48, "#fbdcc0"], [138, 174, 24, 48, "#e1f3e7"], [201, 174, 42, 48, "#cde8dc"], [276, 174, 24, 48, "#fdebd9"],
        ]}
      />
    ),
  },
  {
    name: "Bullet graph",
    art: (
      <Boxes
        items={[
          [33, 31, 285, 47, "#fcfcfc"], [33, 31, 237, 47, "#f9f9f9"], [33, 31, 186, 47, "#f4f4f4"],
          [33, 105, 285, 47, "#fcfcfc"], [33, 105, 186, 47, "#f9f9f9"], [33, 105, 120, 47, "#f4f4f4"],
          [33, 179, 285, 47, "#fcfcfc"], [33, 179, 150, 47, "#f9f9f9"], [33, 179, 102, 47, "#f4f4f4"],
          [33, 43, 150, 23, "#cde8dc"], [33, 117, 240, 23, "#cde8dc"], [33, 191, 126, 23, "#cde8dc"],
          [201, 31, 6, 47, "#c0c0c0"], [243, 105, 6, 47, "#c0c0c0"], [279, 179, 6, 47, "#c0c0c0"],
        ]}
      />
    ),
  },
  {
    name: "Packed bubbles",
    art: (
      <Dots
        items={[
          [93, 164, 57, MINT], [99, 81, 21, GREEN], [157, 65, 30, GREEN], [215, 70, 19, MINT],
          [274, 99, 41, PEACH], [185, 130, 34, PEACH], [242, 161, 22, ORANGE], [182, 198, 25, GREEN],
        ]}
      />
    ),
  },
];

function thumbOutline(name: string) {
  if (name === "Text table") return "outline-2 -outline-offset-2 outline-[#333]";
  if (name === "Discrete lines") return "outline-4 -outline-offset-4 outline-[#ea8e4c]";
  return "outline-2 -outline-offset-2 outline-[#e0e0e0]";
}

function ShowMe() {
  return (
    <aside className="absolute top-2 right-2 flex w-[407px] flex-col drop-shadow-[3px_3px_2px_rgba(0,0,0,0.35)]">
      <button
        type="button"
        className="relative z-10 -mb-0.5 flex h-[74px] w-[213px] items-center self-end border-2 border-b-0 border-[#e0e0e0] bg-[#fafafa] pb-3 pl-5 text-black"
      >
        <svg viewBox="0 0 32 30" className="h-[30px] w-8">
          <Boxes items={[[0, 0, 25, 6, "#86719a"], [0, 8, 32, 6, "#80a4cb"], [0, 16, 13, 6, "#f3a77d"], [0, 24, 19, 6, "#fa6f81"]]} />
        </svg>
        <span className="ml-2.5">Show Me</span>
      </button>
      <div className="border-2 border-[#e0e0e0] bg-[#fafafa] px-[25px] pt-7 pb-[172px] text-2xl text-black">
        <div className="grid w-[352px] grid-cols-3 gap-2">
          {thumbs.map((t) => (
            <button key={t.name} type="button" aria-label={t.name} className={"h-[84px] rounded-xs bg-white " + thumbOutline(t.name)}>
              <svg viewBox="0 0 336 252" className="h-full w-full">
                {t.art}
              </svg>
            </button>
          ))}
        </div>
        <p className="mt-8 pl-1 text-[23px] leading-10">
          For <strong className="font-semibold">text tables</strong> try
        </p>
        <p className="mt-3 flex items-center gap-2 pl-1 leading-10">
          1 or more <span className="rounded-full bg-[#4996b2] pr-6 pl-5 text-white">Dimensions</span>
        </p>
        <p className="mt-4 flex items-center gap-2 pl-1 leading-10">
          1 or more <span className="rounded-full bg-[#00b180] pr-6 pl-5 text-white">Measures</span>
        </p>
      </div>
    </aside>
  );
}

/* ---------- bottom bars ---------- */

function SheetTabs() {
  const small = "flex w-16 items-center justify-center border-r-2 border-[#c9c9c9]";
  return (
    <nav className="flex h-[62px] border-t-2 border-b-2 border-[#d0d0d0] bg-[#e5e5e5] text-[#5c5c5c]">
      <button type="button" className="flex w-[262px] items-center gap-3 border-r-2 border-[#c9c9c9] pl-5">
        <svg viewBox="0 0 16 22" className="h-[22px] w-4" fill="none" stroke="#666" strokeWidth="2">
          <ellipse cx="8" cy="5" rx="7" ry="4" />
          <path d="M1 5v12c0 5 14 5 14 0V5" />
        </svg>
        Data Source
      </button>
      <button type="button" className="w-[115px] border-r-2 border-[#c9c9c9] pr-1">Sheet 1</button>
      <button type="button" className="w-[115px] border-r-2 border-[#c9c9c9] bg-[#fafafa] pr-1 font-bold">Sheet 2</button>
      <button type="button" aria-label="New worksheet" className={small}>
        <svg viewBox="0 0 30 30" className="size-[30px]" fill="none" stroke="#666" strokeWidth="2">
          <path d="M16 22H3a2 2 0 0 1-2-2V3a2 2 0 0 1 2-2h18a2 2 0 0 1 2 2v13M7 17v-4M12 17V7M17 17v-6" />
          <path d="M16 23h14M23 16v14" strokeWidth="4" />
        </svg>
      </button>
      <button type="button" aria-label="New dashboard" className={small}>
        <svg viewBox="0 0 30 30" className="size-[30px]" fill="none" stroke="#666" strokeWidth="2">
          <path d="M14 22H3a2 2 0 0 1-2-2V3a2 2 0 0 1 2-2h18a2 2 0 0 1 2 2v12M1 12h22M12 1v21" />
          <path d="M16 23h14M23 16v14" strokeWidth="4" />
        </svg>
      </button>
      <button type="button" aria-label="New story" className={small}>
        <svg viewBox="0 0 30 30" className="size-[30px]" fill="none" stroke="#666" strokeWidth="2">
          <path d="M12 23 1 19V1l11 5 11-5v14M12 6v17" />
          <path d="M16 23h14M23 16v14" strokeWidth="4" />
        </svg>
      </button>
    </nav>
  );
}

function StatusBar() {
  return (
    <footer className="flex h-10 items-center gap-[30px] bg-[#eaeaea] pl-6 text-xl text-black">
      <span>4 marks</span>
      <span>1 row by 4 columns</span>
      <span>SUM(Sales): 12,642,502</span>
      <div className="ml-auto flex h-full">
        <div className="w-[254px] border-l-2 border-[#c9c9c9]" />
        <div className="w-[54px] border-l-2 border-[#c9c9c9]" />
        <div className="w-[54px] border-l-2 border-[#c9c9c9]" />
        <div className="w-[94px] border-l-2 border-[#c9c9c9]" />
        <div className="flex w-[142px] items-center justify-center gap-[22px] border-l-2 border-[#c9c9c9] pr-1">
          <button type="button" aria-label="First">
            <svg viewBox="0 0 12 14" className="h-3.5 w-3"><path d="M0 0h2v14H0zM12 0v14L4 7z" fill="#b9b9b9" /></svg>
          </button>
          <button type="button" aria-label="Previous">
            <svg viewBox="0 0 8 14" className="h-3.5 w-2"><path d="M8 0v14L0 7z" fill="#b9b9b9" /></svg>
          </button>
          <button type="button" aria-label="Next">
            <svg viewBox="0 0 8 14" className="h-3.5 w-2"><path d="M0 0v14l8-7z" fill="#b9b9b9" /></svg>
          </button>
          <button type="button" aria-label="Last">
            <svg viewBox="0 0 12 14" className="h-3.5 w-3"><path d="M10 0h2v14h-2zM0 0v14l8-7z" fill="#b9b9b9" /></svg>
          </button>
        </div>
        <div className="flex w-[153px] items-center gap-5 border-l-2 border-[#c9c9c9] pl-4">
          <button type="button" aria-label="Tile view">
            <svg viewBox="0 0 22 22" className="size-[22px]" fill="#b9b9b9">
              <path d="M0 0h6v6H0zM8 0h6v6H8zM16 0h6v6h-6zM0 8h6v6H0zM8 8h6v6H8zM16 8h6v6h-6zM0 16h6v6H0zM8 16h6v6H8zM16 16h6v6h-6z" />
            </svg>
          </button>
          <button type="button" aria-label="Filmstrip view">
            <svg viewBox="0 0 22 22" className="size-[22px]" fill="#b9b9b9">
              <path d="M0 0h22v14H0zM0 16h6v6H0zM8 16h6v6H8zM16 16h6v6h-6z" />
            </svg>
          </button>
          <button type="button" aria-label="Single view">
            <svg viewBox="0 0 22 22" className="size-[22px]" fill="#666">
              <rect width="22" height="22" rx="1" />
            </svg>
          </button>
        </div>
      </div>
    </footer>
  );
}

/* ---------- drawn annotations over the workspace ---------- */

function Annotations() {
  return (
    <div className="pointer-events-none absolute inset-0 overflow-hidden font-['Comic_Sans_MS','Comic_Neue',Lato,sans-serif] text-[#ee5445]">
      <svg viewBox="0 0 1100 1700" className="absolute top-0 left-0 h-[1700px] w-[1100px]" fill="none" stroke="#ed4024" strokeWidth="15">
        <path d="M266 774C385 510 640 310 990 323" />
        <path d="M989 286l72 42-76 33z" fill="#ed4024" stroke="none" />
        <path d="M192 1590 730 1181" />
        <path d="M706 1154l81-16-36 75z" fill="#ed4024" stroke="none" />
      </svg>
      <p className="absolute top-[10px] left-[2368px] text-[109px] leading-[138px] font-bold whitespace-nowrap">Sheet Page</p>
      <p className="absolute top-[988px] left-[1122px] text-[109px] leading-[138px] font-bold whitespace-nowrap">
        It is OK to directly drop the Dimensions
        <br />
        or Measures to the worksheet.
      </p>
    </div>
  );
}

export default function App() {
  return (
    <div className="relative flex min-h-screen w-full flex-col overflow-hidden bg-[#f5f5f5] font-['Inter',sans-serif] text-[23px]">
      <Toolbar />
      <main className="flex flex-1">
        <DataPane />
        <div className="flex min-w-0 flex-1 gap-3 px-3 pb-3">
          <Cards />
          <div className="flex min-w-0 flex-1 flex-col gap-3">
            <Shelves />
            <section className="flex-1 border-2 border-[#b3b3b3] bg-white">
              <h1 className="flex h-[90px] items-center pt-2 pl-5 text-[40px] font-light text-[#333]">Sheet 2</h1>
              <Chart />
            </section>
          </div>
        </div>
      </main>
      <SheetTabs />
      <StatusBar />
      <ShowMe />
      <Annotations />
    </div>
  );
}
